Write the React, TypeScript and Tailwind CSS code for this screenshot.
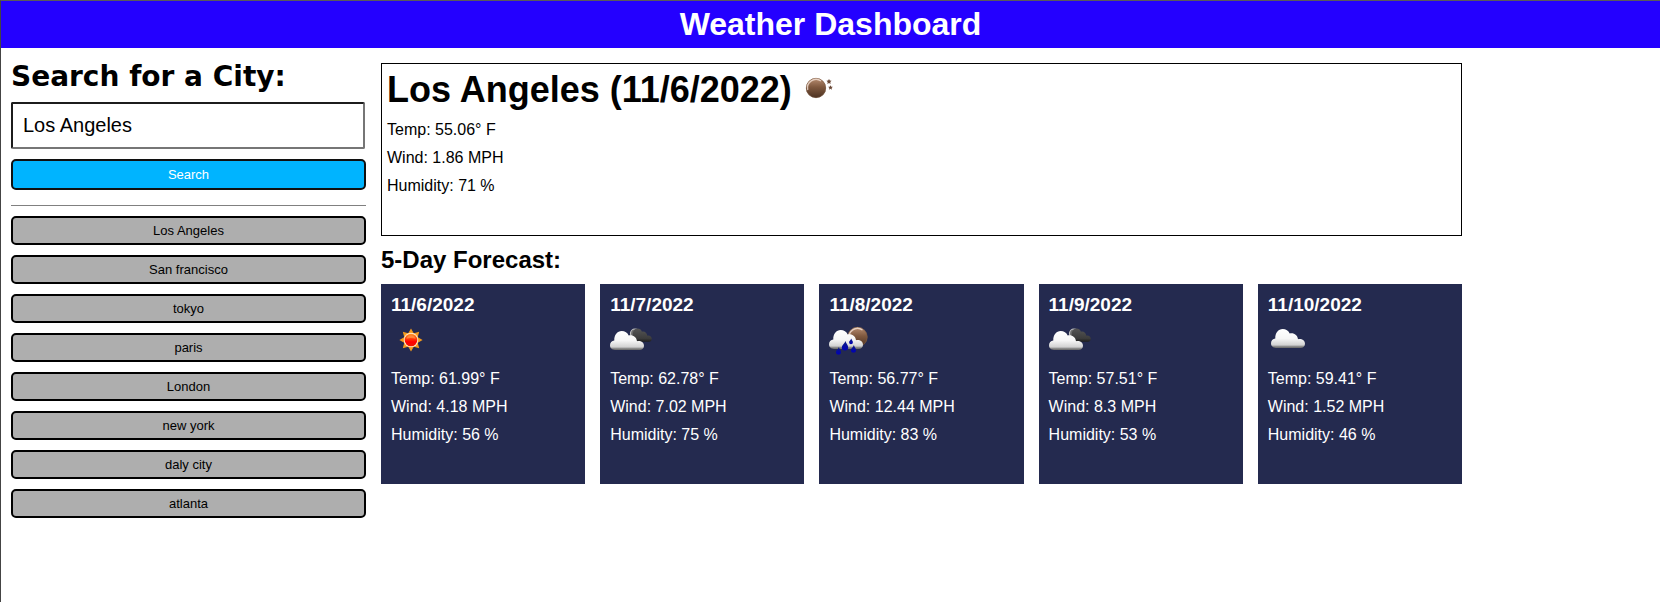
import { useState } from "react";

type IconName = "sun" | "broken-clouds" | "night-rain" | "cloud";

const history = ["Los Angeles", "San francisco", "tokyo", "paris", "London", "new york", "daly city", "atlanta"];

const forecast: { date: string; icon: IconName; temp: string; wind: string; humidity: string }[] = [
  { date: "11/6/2022", icon: "sun", temp: "61.99", wind: "4.18", humidity: "56" },
  { date: "11/7/2022", icon: "broken-clouds", temp: "62.78", wind: "7.02", humidity: "75" },
  { date: "11/8/2022", icon: "night-rain", temp: "56.77", wind: "12.44", humidity: "83" },
  { date: "11/9/2022", icon: "broken-clouds", temp: "57.51", wind: "8.3", humidity: "53" },
  { date: "11/10/2022", icon: "cloud", temp: "59.41", wind: "1.52", humidity: "46" },
];

function Gradients() {
  return (
    <svg width="0" height="0" className="absolute" aria-hidden="true">
      <defs>
        <linearGradient id="cloud" gradientUnits="userSpaceOnUse" x1="0" y1="0" x2="0" y2="19">
          <stop offset="0" stopColor="#ffffff" />
          <stop offset="0.5" stopColor="#f6f6f6" />
          <stop offset="0.84" stopColor="#d2d2d2" />
          <stop offset="0.92" stopColor="#8c8c8c" />
          <stop offset="1" stopColor="#666666" />
        </linearGradient>
        <linearGradient id="darkCloud" gradientUnits="userSpaceOnUse" x1="0" y1="0" x2="0" y2="19">
          <stop offset="0" stopColor="#555555" />
          <stop offset="0.75" stopColor="#3c3c3c" />
          <stop offset="1" stopColor="#1c1c1c" />
        </linearGradient>
        <linearGradient id="moon" x1="0" y1="0" x2="0" y2="1">
          <stop offset="0" stopColor="#b98e72" />
          <stop offset="0.45" stopColor="#80593f" />
          <stop offset="1" stopColor="#4a3020" />
        </linearGradient>
        <linearGradient id="sunCore" x1="0" y1="0" x2="0" y2="1">
          <stop offset="0" stopColor="#ff9a2a" />
          <stop offset="0.4" stopColor="#ff3c08" />
          <stop offset="0.65" stopColor="#ff0000" />
          <stop offset="1" stopColor="#f01800" />
        </linearGradient>
        <linearGradient id="drop" x1="0" y1="0" x2="0" y2="1">
          <stop offset="0" stopColor="#0a1a80" />
          <stop offset="1" stopColor="#0000b8" />
        </linearGradient>
      </defs>
    </svg>
  );
}

function CloudShape({ fill }: { fill: string }) {
  return (
    <path
      fill={fill}
      d="M5 19C2 19 0 17 0 14.3C0 11.8 1.8 10 4.3 9.6C4 4 7.400 0 11.700 0C14.900 0 17.500 1.700 18.700 4.500C22.800 3.400 26.600 6.200 27 10.200C31 9.600 34 11.600 34 14.700C34 17.300 32.200 19 29.500 19Z"
    />
  );
}

function MoonShape() {
  return (
    <>
      <circle r="10" fill="url(#moon)" />
      <circle r="9.700" fill="none" stroke="#7a5a45" strokeWidth="0.600" />
      <path d="M-8.200 2A8.500 8.500 0 0 1 5 -7" fill="none" stroke="#f0dccf" strokeWidth="1.300" opacity="0.85" />
    </>
  );
}

function Drop({ x, y, s }: { x: number; y: number; s: number }) {
  return (
    <path
      transform={`translate(${x} ${y}) scale(${s})`}
      fill="url(#drop)"
      d="M0.500 -5C1 -2.500 3.200 -0.800 3.200 1.300A3 3 0 0 1 -3.200 1.300C-3.200 -0.800 -0.200 -2.500 0.500 -5Z"
    />
  );
}

function WeatherIcon({ name }: { name: IconName }) {
  return (
    <svg width="44" height="40" viewBox="0 0 44 40" className="block" role="img" aria-label={name}>
      {name === "sun" && (
        <g transform="translate(20 20)">
          {[0, 45, 90, 135, 180, 225, 270, 315].map((angle) => (
            <path key={angle} transform={`rotate(${angle})`} d="M0 -11.600L3.200 -6L-3.200 -6Z" fill="#f59a1c" />
          ))}
          <circle r="7.300" fill="#ffe9c8" />
          <circle r="6.300" fill="url(#sunCore)" />
          <path d="M-4.700 -1.200A5 5 0 0 1 4.700 -1.200Q0 -2.600 -4.700 -1.200Z" fill="#ffb060" opacity="0.5" />
        </g>
      )}
      {name === "broken-clouds" && (
        <>
          <circle cx="25" cy="13.500" r="4.500" fill="#6a6a6a" stroke="#c4c4c4" strokeWidth="1.200" />
          <g transform="translate(20 8.500) scale(0.640 0.700)">
            <CloudShape fill="url(#darkCloud)" />
          </g>
          <g transform="translate(0 11)">
            <CloudShape fill="url(#cloud)" />
          </g>
        </>
      )}
      {name === "night-rain" && (
        <>
          <g transform="translate(28.500 17)">
            <MoonShape />
          </g>
          <g transform="translate(0 10)">
            <CloudShape fill="url(#cloud)" />
          </g>
          <Drop x={9.5} y={31} s={0.8} />
          <Drop x={16} y={26} s={1} />
          <Drop x={24.5} y={29} s={0.8} />
          <Drop x={22} y={21.5} s={0.6} />
        </>
      )}
      {name === "cloud" && (
        <g transform="translate(3 9)">
          <CloudShape fill="url(#cloud)" />
        </g>
      )}
    </svg>
  );
}

function ClearNightIcon() {
  const star = "M0 -2.600L0.900 -0.900L2.600 -0.700L1.300 0.600L1.600 2.400L0 1.500L-1.600 2.400L-1.300 0.600L-2.600 -0.700L-0.900 -0.900Z";
  return (
    <svg width="30" height="24" viewBox="0 0 30 24" role="img" aria-label="clear night">
      <g transform="translate(11 12)">
        <MoonShape />
      </g>
      <path d={star} transform="translate(24 5.500)" fill="#6b4a38" />
      <path d={star} transform="translate(25.500 11.500) scale(0.900)" fill="#6b4a38" />
    </svg>
  );
}

function Readings({ temp, wind, humidity }: { temp: string; wind: string; humidity: string }) {
  return (
    <div className="mt-[10px] flex flex-col gap-[10px] text-[16px] leading-[18px]">
      <p>Temp: {temp}° F</p>
      <p>Wind: {wind} MPH</p>
      <p>Humidity: {humidity} %</p>
    </div>
  );
}

export default function App() {
  const [city, setCity] = useState("Los Angeles");

  return (
    <div className="min-h-screen border-t border-l border-t-[#5a5a5a] border-l-[#444444] bg-white font-['Liberation_Sans',Arial,sans-serif] text-black">
      <Gradients />
      <header className="bg-[#2400ff] py-[5px] text-center text-white">
        <h1 className="text-[32px] leading-[37px] font-bold">Weather Dashboard</h1>
      </header>

      <div className="flex items-start gap-[15px] p-[10px]">
        <aside className="w-[355px] shrink-0">
          <form onSubmit={(e) => e.preventDefault()} className="flex flex-col gap-[10px]">
            <label htmlFor="city" className="pt-[4px] font-['DejaVu_Sans',Verdana,sans-serif] text-[28px] leading-[30px] font-bold whitespace-nowrap">
              Search for a City:
            </label>
            <input
              id="city"
              type="text"
              value={city}
              onChange={(e) => setCity(e.target.value)}
              className="mr-px rounded-[2px] border-2 border-t-[#1c1c1c] border-r-[#767676] border-b-[#767676] border-l-[#1c1c1c] bg-white p-[10px] text-[20px] leading-[23px]"
            />
            <button type="submit" className="rounded-[5px] border-2 border-[#101010] bg-[#00b4ff] py-[6px] text-[13px] leading-[15px] text-white">
              Search
            </button>
          </form>
          <hr className="mt-[15px] mb-[10px] border-t border-[#808080]" />
          <ul className="flex flex-col gap-[10px]">
            {history.map((name) => (
              <li key={name}>
                <button
                  type="button"
                  onClick={() => setCity(name)}
                  className="block w-full rounded-[5px] border-2 border-black bg-[#aeaeae] py-[5px] text-[13px] leading-[15px]"
                >
                  {name}
                </button>
              </li>
            ))}
          </ul>
        </aside>

        <main className="mt-[5px] max-w-[1081px] flex-1">
          <section className="min-h-[173px] border border-black p-[5px]">
            <div className="flex items-center gap-[13px]">
              <h2 className="text-[36px] leading-[42px] font-bold">Los Angeles (11/6/2022)</h2>
              <div className="pb-[5px]">
                <ClearNightIcon />
              </div>
            </div>
            <Readings temp="55.06" wind="1.86" humidity="71" />
          </section>

          <h2 className="my-[10px] text-[24px] leading-[28px] font-bold">5-Day Forecast:</h2>
          <div className="grid grid-cols-5 gap-[15px]">
            {forecast.map((day) => (
              <article key={day.date} className="min-h-[200px] bg-[#242a4f] p-[10px] text-white">
                <h3 className="mb-[4px] text-[19px] leading-[22px] font-bold">{day.date}</h3>
                <WeatherIcon name={day.icon} />
                <Readings temp={day.temp} wind={day.wind} humidity={day.humidity} />
              </article>
            ))}
          </div>
        </main>
      </div>
    </div>
  );
}
